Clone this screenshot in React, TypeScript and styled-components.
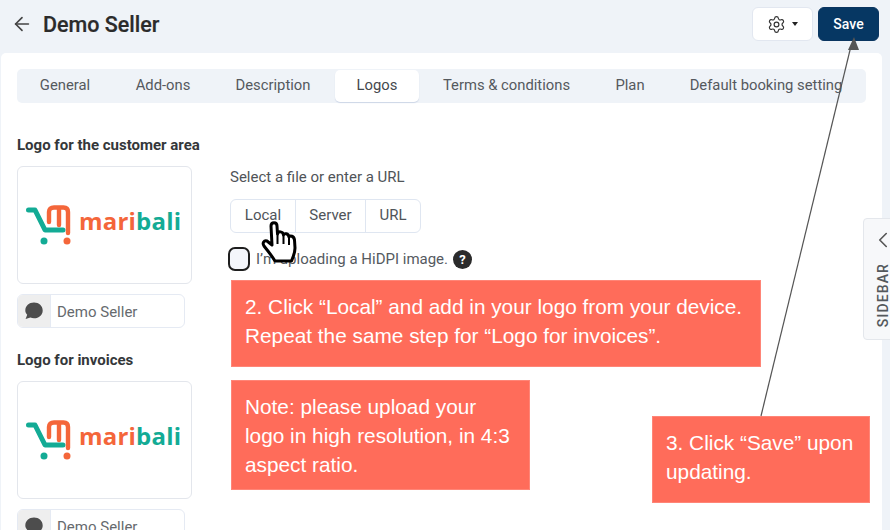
import React from "react";
import styled, { createGlobalStyle } from "styled-components";
import { ArrowLeft, ChevronLeft, Settings } from "lucide-react";

const Global = createGlobalStyle`
  html, body { margin: 0; padding: 0; width: 890px; height: 530px; overflow: hidden; background: #eff3f8; }
  * { box-sizing: border-box; }
  body { font-family: Roboto, "Liberation Sans", sans-serif; color: #3c4043; }
`;

const Page = styled.div`
  position: relative;
  width: 890px;
  height: 530px;
  overflow: hidden;
  padding: 0 8px 0 1px;
`;
const Header = styled.header`
  height: 53px;
  display: flex;
  align-items: center;
  padding: 0 3px 5px 10px;
  gap: 10px;
`;
const Title = styled.h1`
  margin: 0;
  flex: 1;
  font-size: 21.5px;
  font-weight: 500;
  color: #2b2b2b;
  -webkit-text-stroke: 0.2px #2b2b2b;
`;
const Actions = styled.div`
  display: flex;
  gap: 5px;
  align-items: center;
`;
const GearButton = styled.button`
  width: 61px;
  height: 34px;
  border: 1px solid #e2e7f0;
  border-radius: 6px;
  background: #fff;
  display: flex;
  align-items: center;
  justify-content: center;
  gap: 6px;
  color: #333;
  padding: 0;
`;
const Caret = styled.span`
  width: 0;
  height: 0;
  border-left: 3.5px solid transparent;
  border-right: 3.5px solid transparent;
  border-top: 4px solid #222;
`;
const SaveButton = styled.button`
  width: 61px;
  height: 34px;
  border: 1px solid #0a3560;
  border-radius: 6px;
  background: #063763;
  color: #fff;
  font: 500 14px Roboto, sans-serif;
  padding: 0;
`;
const Card = styled.main`
  background: #fff;
  border-radius: 5px 5px 0 0;
  height: 477px;
  padding: 16px;
`;
const Tabs = styled.nav`
  height: 34px;
  background: #eff3f8;
  border-radius: 5px;
  display: flex;
  align-items: stretch;
  padding: 1px 0 1px 1px;
  font-size: 14.8px;
`;
const Tab = styled.div<{ $w: number; $active?: boolean }>`
  width: ${(p) => p.$w}px;
  flex: none;
  display: flex;
  align-items: center;
  justify-content: center;
  white-space: nowrap;
  border-radius: 5px;
  padding-bottom: 2px;
  margin-left: ${(p) => (p.$active ? "3px" : "0")};
  color: ${(p) => (p.$active ? "#44484d" : "#55595e")};
  background: ${(p) => (p.$active ? "#fff" : "transparent")};
  box-shadow: ${(p) => (p.$active ? "0 1px 1px #cdd6e6" : "none")};
`;
const Columns = styled.section`
  display: grid;
  grid-template-columns: 175px 1fr;
  column-gap: 38px;
  padding-top: 32px;
`;
const LeftCol = styled.div`
  display: flex;
  flex-direction: column;
`;
const Label = styled.div`
  font-size: 15px;
  font-weight: 700;
  line-height: 20px;
  white-space: nowrap;
  color: #34373a;
  margin-bottom: 11px;
`;
const LogoBox = styled.div`
  width: 175px;
  height: 118px;
  border: 1px solid #e3e6ec;
  border-radius: 6px;
  display: flex;
  align-items: flex-start;
  gap: 7px;
  padding: 37px 0 0 8px;
  margin-bottom: 10px;
`;
const Word = styled.div`
  font: 700 24px/26px "Open Sans", sans-serif;
  letter-spacing: 0.2px;
  color: #f4663a;
  margin-top: 4px;
`;
const Teal = styled.span`
  color: #13ab95;
`;
const InputGroup = styled.div`
  width: 168px;
  height: 34px;
  border: 1px solid #e5eaf3;
  border-radius: 6px;
  display: flex;
  margin-bottom: 22px;
  flex: none;
  overflow: hidden;
`;
const Addon = styled.div`
  width: 33px;
  background: #eeeeee;
  border-right: 1px solid #e5eaf3;
  display: flex;
  align-items: center;
  justify-content: center;
`;
const InputText = styled.div`
  flex: 1;
  display: flex;
  align-items: center;
  padding: 2px 0 0 6px;
  font-size: 15px;
  color: #666a6e;
`;
const RightCol = styled.div`
  padding-top: 32px;
`;
const Hint = styled.div`
  font-size: 15px;
  line-height: 20px;
  color: #505458;
  margin-bottom: 12px;
`;
const BtnGroup = styled.div`
  display: inline-flex;
  height: 34px;
  border: 1px solid #dfe6f1;
  border-radius: 6px;
  vertical-align: top;
`;
const GroupBtn = styled.div<{ $w: number }>`
  width: ${(p) => p.$w}px;
  display: flex;
  align-items: center;
  justify-content: center;
  padding-bottom: 2px;
  font-size: 15px;
  color: #50545a;
  & + & { border-left: 1px solid #dfe6f1; }
`;
const CheckRow = styled.div`
  display: flex;
  align-items: center;
  margin: 14px 0 0 -2px;
  height: 24px;
  font-size: 15px;
  color: #555a5f;
`;
const Check = styled.span`
  width: 22px;
  height: 24px;
  border: 2px solid #1e1e1e;
  border-radius: 7px;
  background: #f4f6fb;
  margin-right: 6px;
`;
const Help = styled.span`
  width: 19px;
  height: 19px;
  border-radius: 50%;
  background: #2b2b2b;
  color: #fff;
  font-size: 13px;
  font-weight: 700;
  display: inline-flex;
  align-items: center;
  justify-content: center;
  margin-left: 5px;
`;
const Note = styled.div<{ $x: number; $y: number; $w: number; $h: number }>`
  position: absolute;
  left: ${(p) => p.$x}px;
  top: ${(p) => p.$y}px;
  width: ${(p) => p.$w}px;
  height: ${(p) => p.$h}px;
  background: #ff6c5a;
  border: 1px solid #ff8577;
  color: #fff;
  font: 20.8px/29px "Liberation Sans", Arial, sans-serif;
  padding: 11px 13px;
  white-space: nowrap;
`;
const SidebarTab = styled.aside`
  position: absolute;
  left: 863px;
  top: 218px;
  width: 40px;
  height: 122px;
  background: #f7f8fa;
  border: 1px solid #e4e7ec;
  border-radius: 4px;
  display: flex;
  flex-direction: column;
  align-items: center;
  padding-top: 8px;
  color: #555;
`;
const SidebarText = styled.span`
  writing-mode: vertical-rl;
  transform: rotate(180deg);
  font-size: 14px;
  font-weight: 500;
  letter-spacing: 1.1px;
  margin-top: 10px;
  color: #54585c;
`;
const Overlay = styled.svg`
  position: absolute;
  left: 0;
  top: 0;
  pointer-events: none;
`;

const Cart = () => (
  <svg width="46" height="42" viewBox="0 0 46 42" fill="none">
    <path d="M2.500 6H9L19 26H37" stroke="#13ab95" strokeWidth="5" strokeLinejoin="round" strokeLinecap="round" />
    <path d="M23 18V8Q23 3.500 28 3.500H37.500Q42 3.500 42 8V29M33 3.500V21" stroke="#f4663a" strokeWidth="4.400" strokeLinecap="round" />
    <circle cx="18" cy="37" r="3.500" fill="#13ab95" />
    <circle cx="41" cy="37" r="3.500" fill="#f4663a" />
  </svg>
);

const Logo = () => (
  <LogoBox>
    <Cart />
    <Word>mari<Teal>bali</Teal></Word>
  </LogoBox>
);

const Bubble = () => (
  <svg width="20" height="20" viewBox="0 0 20 20"><path d="M10 1.500c5 0 8.700 3.400 8.700 7.900s-3.700 7.800-8.700 7.800c-1.300 0-2.500-.2-3.600-.7L1.600 18l1.600-4.300C2 12.400 1.300 11 1.300 9.400 1.300 4.900 5 1.500 10 1.500z" fill="#4d4d4d" /></svg>
);

export default function App() {
  return (
    <Page>
      <Global />
      <Header>
        <ArrowLeft size={22} color="#444" strokeWidth={1.8} />
        <Title>Demo Seller</Title>
        <Actions>
          <GearButton><Settings size={19} strokeWidth={1.5} /><Caret /></GearButton>
          <SaveButton>Save</SaveButton>
        </Actions>
      </Header>
      <Card>
        <Tabs>
          <Tab $w={94}>General</Tab>
          <Tab $w={102}>Add-ons</Tab>
          <Tab $w={118}>Description</Tab>
          <Tab $w={84} $active>Logos</Tab>
          <Tab $w={175}>Terms &amp; conditions</Tab>
          <Tab $w={72}>Plan</Tab>
          <Tab $w={200}>Default booking setting</Tab>
        </Tabs>
        <Columns>
          <LeftCol>
            <Label>Logo for the customer area</Label>
            <Logo />
            <InputGroup><Addon><Bubble /></Addon><InputText>Demo Seller</InputText></InputGroup>
            <Label>Logo for invoices</Label>
            <Logo />
            <InputGroup><Addon><Bubble /></Addon><InputText>Demo Seller</InputText></InputGroup>
          </LeftCol>
          <RightCol>
            <Hint>Select a file or enter a URL</Hint>
            <BtnGroup>
              <GroupBtn $w={64}>Local</GroupBtn>
              <GroupBtn $w={70}>Server</GroupBtn>
              <GroupBtn $w={55}>URL</GroupBtn>
            </BtnGroup>
            <CheckRow><Check />I’m uploading a HiDPI image.<Help>?</Help></CheckRow>
          </RightCol>
        </Columns>
      </Card>
      <SidebarTab><ChevronLeft size={26} strokeWidth={1.5} /><SidebarText>SIDEBAR</SidebarText></SidebarTab>
      <Note $x={231} $y={280} $w={530} $h={87}>2. Click “Local” and add in your logo from your device.<br />Repeat the same step for “Logo for invoices”.</Note>
      <Note $x={231} $y={380} $w={299} $h={110}>Note: please upload your<br />logo in high resolution, in 4:3<br />aspect ratio.</Note>
      <Note $x={652} $y={416} $w={218} $h={87}>3. Click “Save” upon<br />updating.</Note>
      <Overlay width="890" height="530" viewBox="0 0 890 530">
        <line x1="761" y1="416" x2="851" y2="46" stroke="#555" strokeWidth="1.2" />
        <path d="M854 37L848 50L859 50Z" fill="#555" />
        <path d="M271 226C271 221.500 277 221.500 277 226L277.500 234C278 231 283 231 283.500 235C284 233 288.500 233 289 237C290 235 294 236 294.500 240L295 248C295 253 293 257 291.500 261L275 261C272 256 268 251 264 246C262 243 264 240 267 241L272 245Z" fill="#fff" stroke="#000" strokeWidth="3" strokeLinejoin="round" />
        <path d="M277.500 234V244M283.500 235V244M289 237V245" stroke="#000" strokeWidth="2" fill="none" />
      </Overlay>
    </Page>
  );
}
